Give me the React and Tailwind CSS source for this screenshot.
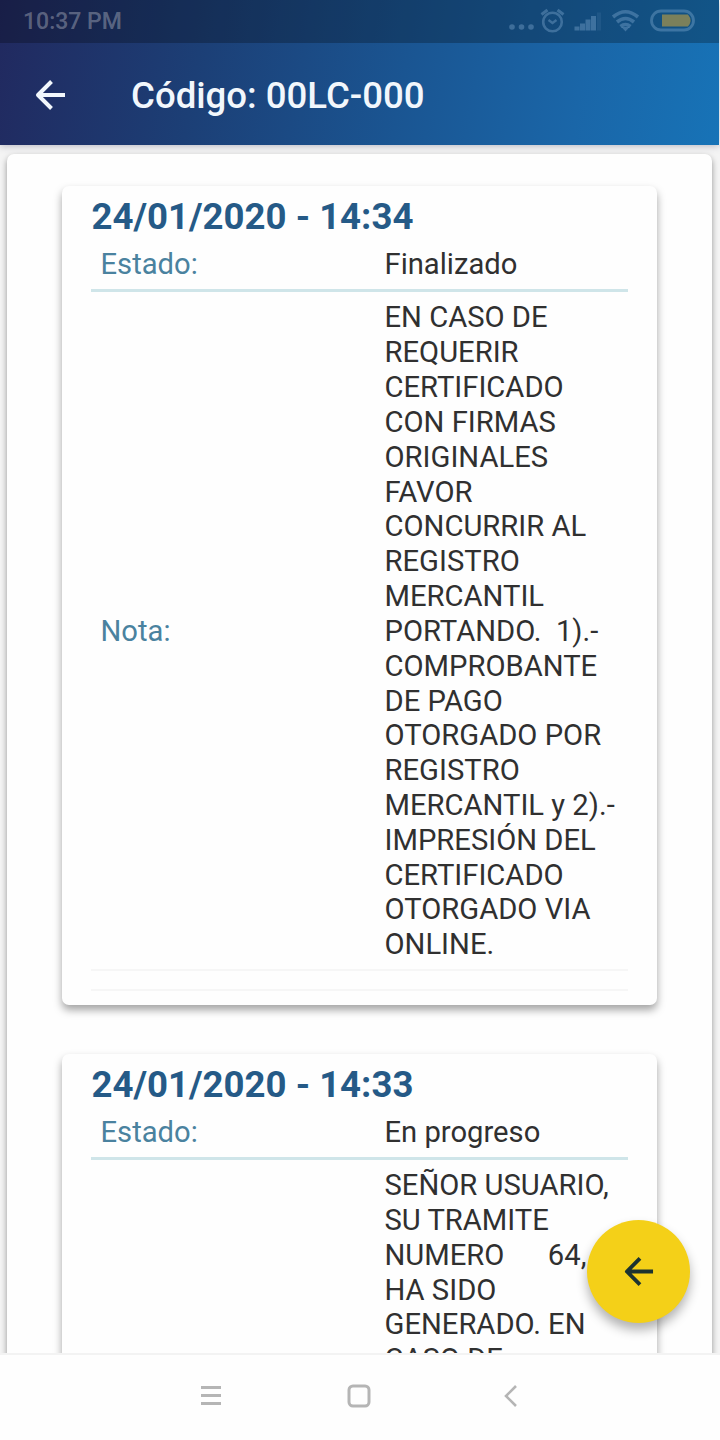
const entries = [
  {
    date: "24/01/2020 - 14:34",
    status: "Finalizado",
    note: [
      "EN CASO DE",
      "REQUERIR",
      "CERTIFICADO",
      "CON FIRMAS",
      "ORIGINALES",
      "FAVOR",
      "CONCURRIR AL",
      "REGISTRO",
      "MERCANTIL",
      "PORTANDO.  1).-",
      "COMPROBANTE",
      "DE PAGO",
      "OTORGADO POR",
      "REGISTRO",
      "MERCANTIL y 2).-",
      "IMPRESIÓN DEL",
      "CERTIFICADO",
      "OTORGADO VIA",
      "ONLINE.",
    ],
  },
  {
    date: "24/01/2020 - 14:33",
    status: "En progreso",
    note: [
      "SEÑOR USUARIO,",
      "SU TRAMITE",
      "NUMERO      64,",
      "HA SIDO",
      "GENERADO. EN",
      "CASO DE",
    ],
    // the label of a long note sits below the fold
    open: true,
  },
];

function BackArrow({ className }) {
  return (
    <svg viewBox="0 0 32 32" className={className} fill="none" stroke="currentColor" strokeWidth="4">
      <path d="M17.5 2.5 4 16l13.5 13.5M4 16h27" strokeLinejoin="round" />
    </svg>
  );
}

function StatusBar() {
  return (
    <div className="flex h-[43px] items-center justify-between bg-black/25 pl-[23px] pr-[24px]">
      <span className="pt-[2px] text-[23px] font-medium text-white/30">10:37 PM</span>
      <svg
        width="188"
        height="43"
        viewBox="507 0.5 188 43"
        className="text-[#8fb8dc]/35"
        fill="none"
        stroke="currentColor"
      >
        <g fill="currentColor" stroke="none">
          <circle cx="512" cy="27.5" r="2.8" />
          <circle cx="521.5" cy="27.5" r="2.8" />
          <circle cx="531" cy="27.5" r="2.8" />
        </g>
        <circle cx="552.5" cy="22.5" r="9.3" strokeWidth="2.6" />
        <path d="M541.5 15l6-4.5M563.5 15l-6-4.5" strokeWidth="3" />
        <path d="M548.5 20.5l4 3 4-3" strokeWidth="2.4" />
        <g fill="currentColor" stroke="none">
          <rect x="574.5" y="27" width="5" height="4" />
          <rect x="580" y="24" width="5" height="7" />
          <rect x="585.5" y="20" width="5" height="11" />
          <rect x="591" y="16.5" width="5" height="14.5" />
          <rect x="597" y="13" width="4" height="18" opacity="0.3" />
        </g>
        <path d="M613 17.5q12.5-10.5 25 0M617 22.5q8.5-7 17 0M620.5 27q5-4 10 0" strokeWidth="3.6" />
        <path d="M621.5 27.5h8l-4 4.5z" fill="currentColor" stroke="none" />
        <rect x="651.5" y="11.5" width="42" height="19" rx="9.5" strokeWidth="2.8" />
        <path d="M662 15h26q5 6 0 12h-26z" fill="#b39a45" fillOpacity="0.65" stroke="none" />
      </svg>
    </div>
  );
}

function Header() {
  return (
    <header className="relative z-10 mr-px h-[145px] bg-[linear-gradient(100deg,#21295f_0%,#1c3f76_28%,#1a5592_56%,#1a66a8_80%,#1773b7_100%)] shadow-[0_1px_7px_rgba(70,70,100,0.35)]">
      <StatusBar />
      <div className="flex h-[104px] items-center pl-[34px] text-[#f2f7fc]">
        <BackArrow className="size-[32px]" />
        <h1 className="ml-[65px] whitespace-nowrap pt-[2px] text-[36.6px] font-medium leading-none">
          Código: 00LC-000
        </h1>
      </div>
    </header>
  );
}

function EntryCard({ entry }) {
  return (
    <section className="mb-[49px] rounded-[7px] bg-[#fefefe] px-[29px] pb-[14px] shadow-[0_5px_9px_rgba(0,0,0,0.36)]">
      <h2 className="h-[60px] whitespace-pre pl-[0.5px] text-[36.6px] font-bold leading-[61px] text-[#255a87]">
        {entry.date}
      </h2>
      <div className="flex h-[46px] border-b-[3px] border-[#cfe5e9] pl-[9.5px] text-[29.2px] leading-[37px]">
        <span className="w-[284px] text-[#4a829f]">Estado:</span>
        <span className="text-[#303030]">{entry.status}</span>
      </div>
      <div className="flex items-center border-b-2 border-[#f6f6f6] pb-[6.6px] pl-[9.5px] pt-[8.4px] text-[29.2px] leading-[34.83px]">
        <span className="w-[284px] shrink-0 text-[#4a829f]">{entry.open ? "" : "Nota:"}</span>
        <p className="whitespace-pre text-[#303030]">{entry.note.join("\n")}</p>
      </div>
      <div className="h-[20px] border-b-2 border-[#f6f6f6]" />
    </section>
  );
}

function NavBar() {
  return (
    <nav className="relative z-10 h-[87px] border-t-2 border-[#f3f3f3] bg-[#fefefe] text-[#b5b5b5]">
      <svg width="720" height="85" viewBox="0 1355 720 85" fill="none" stroke="currentColor">
        <path d="M201 1387.5h20M201 1395.500h20M201 1403.500h20" strokeWidth="2.8" />
        <rect x="349" y="1386" width="20" height="20" rx="4" strokeWidth="3" />
        <path d="M516 1386l-10 10 10 10" strokeWidth="2.6" />
      </svg>
    </nav>
  );
}

export default function App() {
  return (
    <div className="relative flex h-[1440px] w-[720px] flex-col overflow-hidden bg-white font-['Roboto',sans-serif]">
      <Header />
      <main className="min-h-0 flex-1 overflow-hidden bg-[#f4f4f4] pl-[7px] pr-[8px] pt-[9px]">
        <div className="h-[1300px] rounded-[7px] bg-[#fefefe] pl-[55px] pr-[55px] pt-[32px] shadow-[0_3px_6px_rgba(0,0,0,0.4)]">
          {entries.map((entry) => (
            <EntryCard key={entry.date} entry={entry} />
          ))}
        </div>
      </main>
      <NavBar />
      <button
        aria-label="Volver"
        className="absolute left-[587px] top-[1220px] z-20 flex size-[103px] items-center justify-center rounded-full bg-[#f4d018] text-[#1c3330] shadow-[0_7px_11px_rgba(0,0,0,0.3)]"
      >
        <BackArrow className="size-[31px]" />
      </button>
    </div>
  );
}
